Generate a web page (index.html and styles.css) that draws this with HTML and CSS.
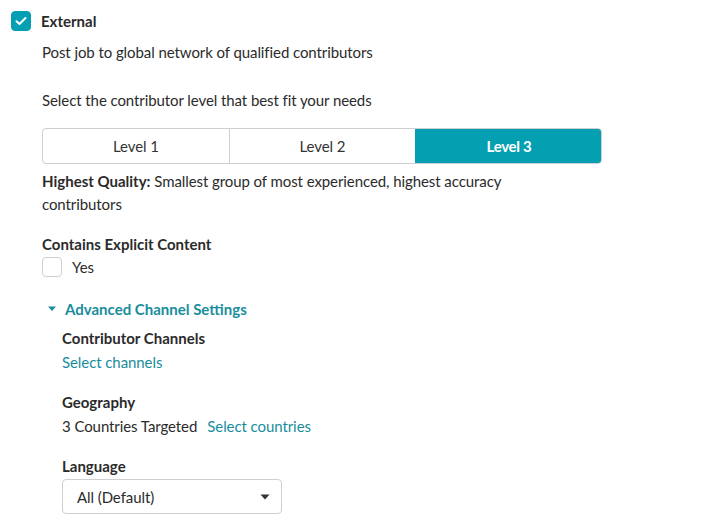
FILE: index.html
```html
<!DOCTYPE html>
<html>
<head>
<meta charset="utf-8">
<link rel="stylesheet" href="styles.css">
</head>
<body>
<div class="page">
  <div class="head-row">
    <span class="check checked">
      <svg width="12" height="10" viewBox="0 0 12 10"><path d="M1.5 5.2 L4.5 8 L10.5 2" fill="none" stroke="#fff" stroke-width="2" stroke-linecap="round" stroke-linejoin="round"/></svg>
    </span>
    <span class="head-label">External</span>
  </div>
  <div class="body">
    <p class="line desc">Post job to global network of qualified contributors</p>
    <p class="line prompt">Select the contributor level that best fit your needs</p>
    <div class="seg">
      <div class="seg-item">Level 1</div>
      <div class="seg-item">Level 2</div>
      <div class="seg-item active">Level 3</div>
    </div>
    <p class="quality"><b>Highest Quality:</b> <span>Smallest group of most experienced, highest accuracy contributors</span></p>
    <p class="line label explicit">Contains Explicit Content</p>
    <div class="yes-row">
      <span class="check"></span>
      <span>Yes</span>
    </div>
    <div class="adv-row">
      <svg class="caret" width="10" height="6" viewBox="0 0 10 6"><path d="M1 0.5 H9 L5 5 Z" fill="#1a8d9c"/></svg>
      <span class="adv-label">Advanced Channel Settings</span>
    </div>
    <div class="adv">
      <p class="line label">Contributor Channels</p>
      <p class="line link">Select channels</p>
      <p class="line label gap">Geography</p>
      <p class="line">3 Countries Targeted<span class="link inline">Select countries</span></p>
      <p class="line label gap">Language</p>
      <div class="select">
        <span>All (Default)</span>
        <svg width="10" height="6" viewBox="0 0 10 6"><path d="M0.5 0.5 H9.5 L5 5.5 Z" fill="#333"/></svg>
      </div>
    </div>
  </div>
</div>
</body>
</html>
```

FILE: styles.css
```css
* { box-sizing: border-box; }
html, body { margin: 0; padding: 0; background: #fff; }
body {
  font-family: Lato, "Open Sans", sans-serif;
  font-size: 15px;
  letter-spacing: -0.08px;
  color: #2b2b2b;
}
p { margin: 0; }
.page { padding: 11px 0 0 11px; }
.head-row {
  display: flex;
  align-items: center;
  height: 20px;
  gap: 10px;
}
.head-label { font-weight: 700; color: #2a2a2a; letter-spacing: 0; }
.check {
  width: 20px;
  height: 20px;
  border: 1px solid #cfcfcf;
  border-radius: 4px;
  display: inline-flex;
  align-items: center;
  justify-content: center;
  flex: none;
  background: #fff;
}
.check.checked { background: #049fb1; border-color: #049fb1; }
.body { padding-left: 31px; }
.line { line-height: 24px; }
.desc { margin-top: 9px; }
.prompt { margin-top: 24px; }
.seg {
  margin-top: 16px;
  width: 560px;
  height: 36px;
  display: grid;
  grid-template-columns: 1fr 1fr 1fr;
  border: 1px solid #cfcfcf;
  border-radius: 4px;
  overflow: hidden;
}
.seg-item {
  display: flex;
  align-items: center;
  justify-content: center;
  color: #333;
  border-left: 1px solid #cfcfcf;
}
.seg-item:first-child { border-left: none; }
.seg-item.active {
  background: #049fb1;
  color: #fff;
  font-weight: 700;
  letter-spacing: -0.3px;
  border-left-color: #049fb1;
  margin: -1px -1px -1px 0;
}
.quality {
  margin-top: 6px;
  line-height: 23px;
  width: 480px;
}
.quality b { font-weight: 700; letter-spacing: 0; }
.label { font-weight: 700; letter-spacing: 0; }
.explicit { margin-top: 16px; }
.yes-row {
  margin-top: 1px;
  display: flex;
  align-items: center;
  height: 20px;
  gap: 10px;
}
.adv-row {
  margin-top: 20px;
  display: flex;
  align-items: center;
  height: 24px;
  padding-left: 5px;
  gap: 8px;
}
.adv-label { font-weight: 700; color: #1a8d9c; letter-spacing: 0; }
.adv { padding-left: 20px; margin-top: 5px; }
.link { color: #1a8d9c; }
.link.inline { margin-left: 10px; }
.gap { margin-top: 16px; }
.select {
  margin-top: 1px;
  width: 220px;
  height: 35px;
  border: 1px solid #cfcfcf;
  border-radius: 4px;
  display: flex;
  align-items: center;
  justify-content: space-between;
  padding: 0 11px 0 14px;
  color: #2b2b2b;
}
```
